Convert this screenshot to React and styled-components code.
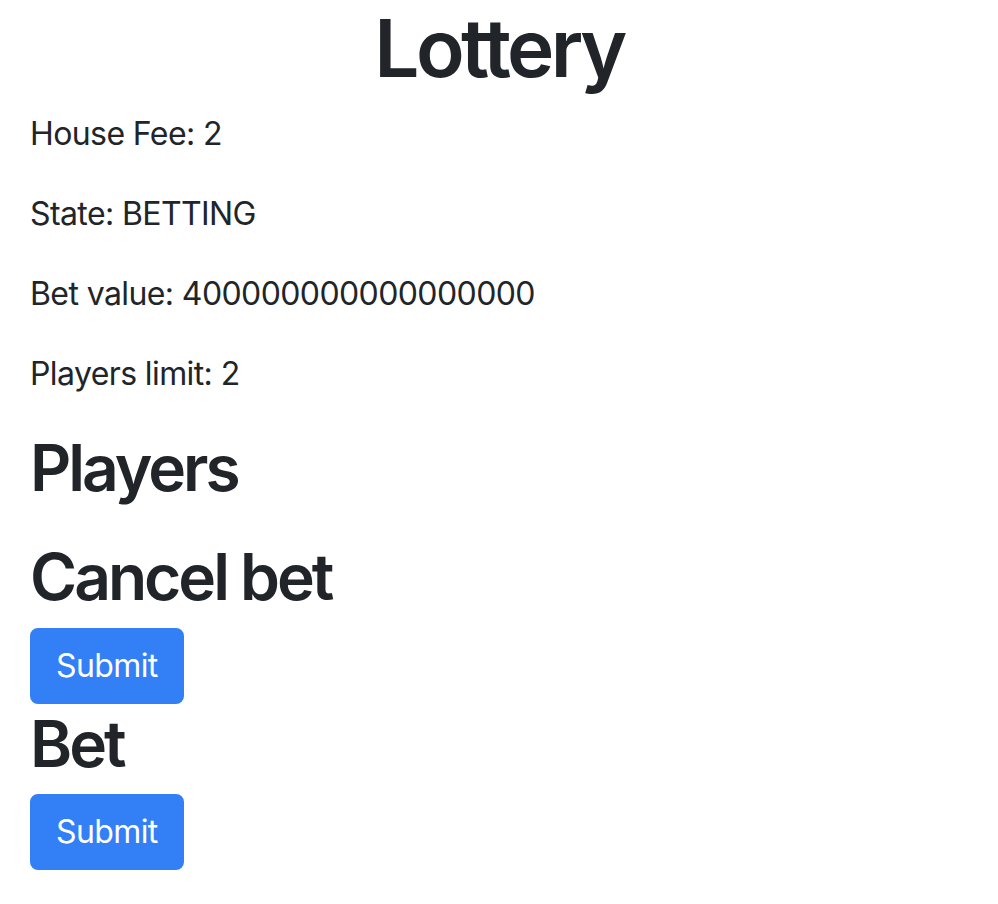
import React from 'react'
import styled, { createGlobalStyle } from 'styled-components'

const GlobalStyle = createGlobalStyle`
    body {
        margin: 0;
        background: #fff;
        color: #212529;
        font-family: Inter, "Liberation Sans", Arial, sans-serif;
        font-size: 32px;
        line-height: 1.5;
        letter-spacing: -0.6px;
    }
`

const info = [
    ['House Fee', '2'],
    ['State', 'BETTING'],
    ['Bet value', '400000000000000000'],
    ['Players limit', '2'],
]

const App = () => {
    return (
        <>
            <GlobalStyle />
            <Page>
                <Title>Lottery</Title>
                {info.map(([label, value]) => (
                    <Info key={label}>{label}: {value}</Info>
                ))}
                <SectionTitle>Players</SectionTitle>
                <PlayerList />
                <Form onSubmit={e => e.preventDefault()}>
                    <SectionTitle>Cancel bet</SectionTitle>
                    <SubmitButton type="submit">Submit</SubmitButton>
                </Form>
                <Form onSubmit={e => e.preventDefault()}>
                    <SectionTitle>Bet</SectionTitle>
                    <SubmitButton type="submit">Submit</SubmitButton>
                </Form>
            </Page>
        </>
    )
}

const Page = styled.div`
    padding: 0 30px;
`

const Title = styled.h1`
    margin: 0 0 14px;
    font-size: 80px;
    font-weight: 600;
    line-height: 96px;
    letter-spacing: -3.6px;
    text-align: center;
`

const Info = styled.p`
    margin: 0 0 32px;
`

const SectionTitle = styled.h2`
    margin: 0 0 12px;
    font-size: 64px;
    font-weight: 600;
    line-height: 1.2;
    letter-spacing: -3px;
`

const PlayerList = styled.ul`
    margin: 0 0 32px;
    padding: 0;
`

const Form = styled.form`
    margin: 0 0 2px;
`

const SubmitButton = styled.button`
    display: inline-block;
    padding: 12px 24px;
    border: 2px solid #337ff6;
    border-radius: 8px;
    background: #337ff6;
    color: #fff;
    font-family: inherit;
    font-size: 32px;
    line-height: 48px;
    letter-spacing: -0.6px;
    cursor: pointer;
    vertical-align: top;
`

export default App
